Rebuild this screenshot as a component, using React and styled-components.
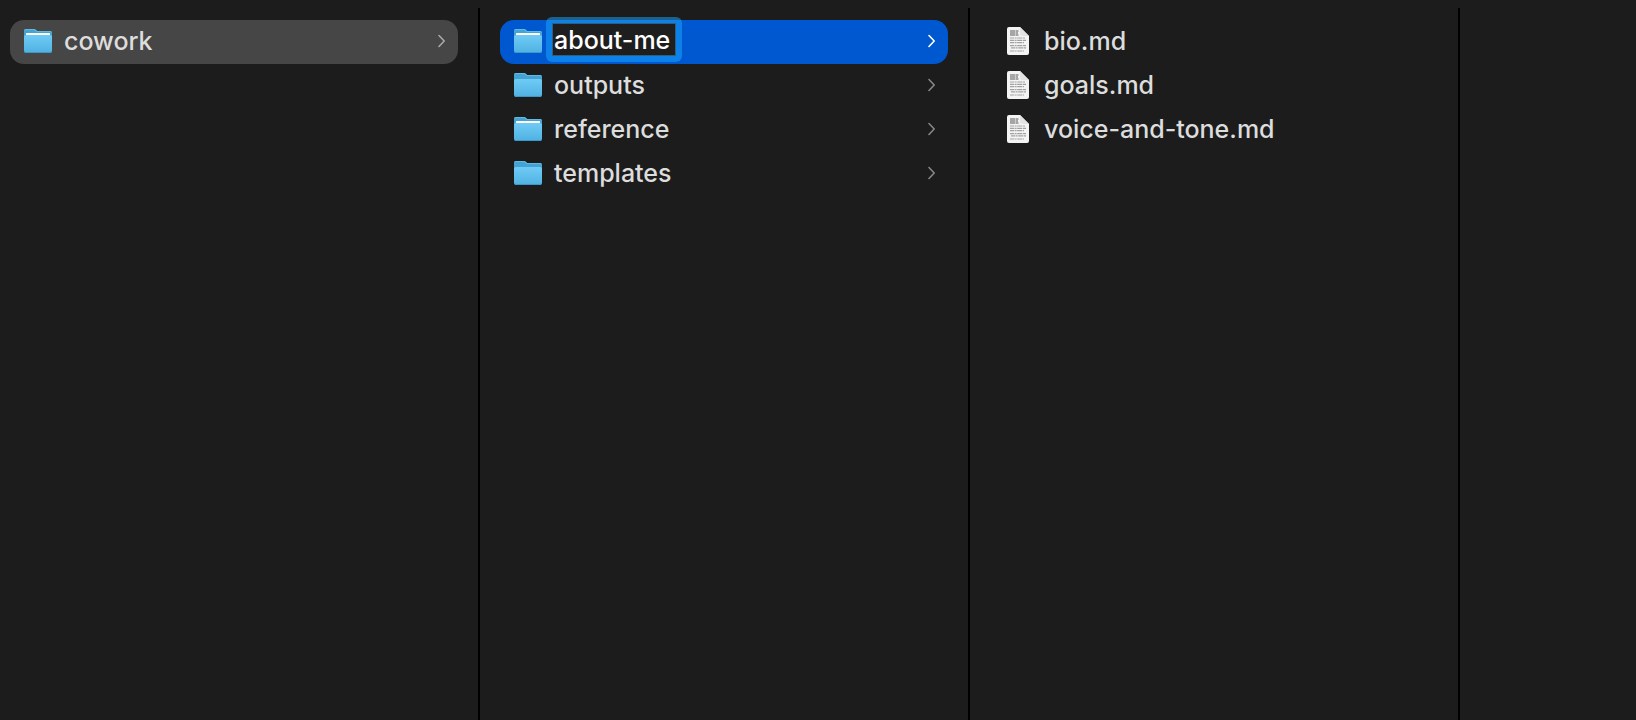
import React, { useId, useState } from 'react';
import styled, { createGlobalStyle } from 'styled-components';

const root = [{ name: 'cowork', type: 'folder', full: true }]

const folders = [
    { name: 'about-me', type: 'folder', full: true },
    { name: 'outputs', type: 'folder' },
    { name: 'reference', type: 'folder', full: true },
    { name: 'templates', type: 'folder' },
]

const files = [
    { name: 'bio.md', type: 'file' },
    { name: 'goals.md', type: 'file' },
    { name: 'voice-and-tone.md', type: 'file' },
]

const FolderIcon = ({ full }) => {
    const id = useId()

    return (
        <svg width="28" height="26" viewBox="0 0 28 26" aria-hidden="true">
            <defs>
                <linearGradient id={id} x1="0" y1="0" x2="0" y2="1">
                    <stop offset="0" stopColor="#70cbf6" />
                    <stop offset="1" stopColor="#4fb1e2" />
                </linearGradient>
            </defs>
            <path d="M0 3Q0 1 2 1H10Q11 1 12 2L13 3H26Q28 3 28 5V20H0Z" fill="#43a3d3" />
            <path d="M0 3Q0 1 2 1H10Q11 1 12 2L13 3H26Q28 3 28 5V5.500Q28 4 26 4H12.500L11.500 3Q11 2 10 2H2Q0 2 0 4Z" fill="#62b9e2" />
            {full && <path d="M2 5.500Q2 5 2.500 5H25.500Q26 5 26 5.500V10H2Z" fill="#fff" />}
            <path d="M0 9Q0 7 2 7H26Q28 7 28 9V23Q28 25 26 25H2Q0 25 0 23Z" fill={`url(#${id})`} />
            <path d="M.500 23.500Q1 24.500 2.500 24.500H25.500Q27 24.500 27.500 23.500" fill="none" stroke="#3d98c8" />
        </svg>
    )
}

const FileIcon = () => (
    <svg width="28" height="28" viewBox="0 0 28 28" aria-hidden="true">
        <path d="M3 2Q3 0 5 0H16L25 9V26Q25 28 23 28H5Q3 28 3 26Z" fill="#f4f4f4" />
        <path d="M16 0L25 9H18Q16 9 16 7Z" fill="#e2e2e2" />
        <path d="M6 4H15M6 6H14M6 8H15" stroke="#8c8c8c" strokeWidth="1.400" strokeDasharray="5 .500 3 .500" />
        <path d="M6 11H21M6 13.300H22M6 15.600H20M6 18.600H22M7 20.900H22M6 24H20" stroke="#a2a2a2" strokeWidth="1.200" strokeDasharray="4 .600 2 .600 5 .600" />
    </svg>
)

const Chevron = () => (
    <svg width="8" height="14" viewBox="0 0 8 14" aria-hidden="true">
        <path d="M1 1.500L6.200 7L1 12.500" fill="none" stroke="currentColor" strokeWidth="1.600" strokeLinecap="round" strokeLinejoin="round" />
    </svg>
)

const Entry = ({ item, state, editing }) => {
    const [name, setName] = useState(item.name)
    const icon = item.type === 'folder' ? <FolderIcon full={item.full} /> : <FileIcon />

    if (editing) {
        return (
            <Row as="div" $state={state}>
                {icon}
                <RenameRing>
                    <RenameInput aria-label="Folder name" value={name} onChange={(e) => setName(e.target.value)} />
                </RenameRing>
                <Chevron />
            </Row>
        )
    }

    return (
        <Row type="button" $state={state}>
            {icon}
            <Name>{name}</Name>
            {item.type === 'folder' && <Chevron />}
        </Row>
    )
}

const App = () => {
    return (
        <Browser>
            <GlobalStyle />
            <Column $first>
                {root.map((item) => (
                    <li key={item.name}><Entry item={item} state="open" /></li>
                ))}
            </Column>
            <Column>
                {folders.map((item, i) => (
                    <li key={item.name}>
                        <Entry item={item} state={i === 0 ? 'selected' : undefined} editing={i === 0} />
                    </li>
                ))}
            </Column>
            <Column>
                {files.map((item) => (
                    <li key={item.name}><Entry item={item} /></li>
                ))}
            </Column>
        </Browser>
    );
};

const GlobalStyle = createGlobalStyle`
    * {
        box-sizing: border-box;
    }

    body {
        margin: 0;
        background: #1c1c1c;
    }
`

const Browser = styled.main`
    display: grid;
    grid-template-columns: 480fr 490fr 490fr 176fr;
    min-height: 100vh;
    padding-top: 8px;
    font-family: Inter, "Liberation Sans", sans-serif;
    font-size: 25px;
    font-weight: 500;
    line-height: 32px;
    color: #dddddd;
`

const Column = styled.ul`
    list-style: none;
    min-width: 0;
    margin: 0;
    padding: 12px 20px 12px ${(props) => (props.$first ? '10px' : '20px')};
    border-right: 2px solid #000;
`

const rowColors = {
    open: { background: '#464646', chevron: '#a8a8a8' },
    selected: { background: '#0058d0', chevron: '#ffffff' },
    none: { background: 'transparent', chevron: '#868686' },
}

const Row = styled.button`
    display: flex;
    align-items: center;
    gap: 12px;
    width: 100%;
    height: 44px;
    padding: 0 12px 2px 14px;
    border: 0;
    border-radius: 14px;
    background: ${(props) => rowColors[props.$state || 'none'].background};
    color: inherit;
    font: inherit;
    text-align: left;

    svg {
        flex: none;
    }

    svg:last-child {
        margin-left: auto;
        color: ${(props) => rowColors[props.$state || 'none'].chevron};
    }

    svg:only-of-type {
        margin-left: 0;
        color: inherit;
    }
`

const Name = styled.span`
    min-width: 0;
    white-space: nowrap;
`

const RenameRing = styled.span`
    display: flex;
    width: 136px;
    height: 45px;
    margin: -4px 0 -1px -8px;
    padding: 6px;
    border-radius: 6px;
    background: rgba(26, 169, 255, 0.5);
`

const RenameInput = styled.input`
    width: 100%;
    padding: 0 0 0 1px;
    border: 1px solid #2c5f80;
    border-radius: 0;
    outline: 0;
    background: #1e1e1e;
    color: #ffffff;
    font: inherit;
`

export default App;
